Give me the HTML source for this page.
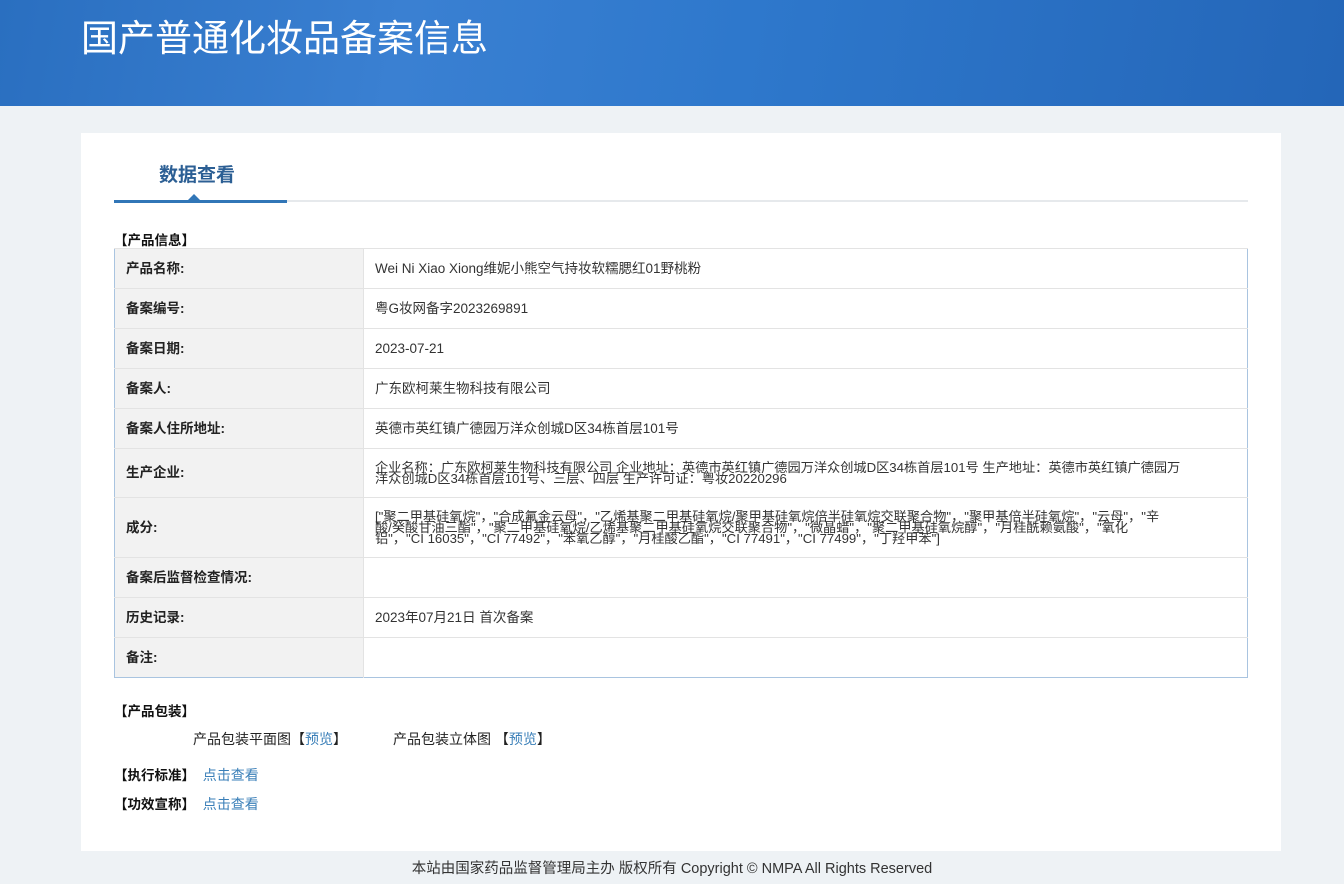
<!DOCTYPE html>
<html><head><meta charset="utf-8"><style>
*{margin:0;padding:0;box-sizing:border-box}
body{width:1344px;height:884px;background:#eef2f5;font-family:"Liberation Sans","Noto Sans CJK SC",sans-serif;color:#333;position:relative;overflow:hidden}
.hdr{position:absolute;left:0;top:0;width:1344px;height:106px;background:linear-gradient(100deg,#2a6fc0 0%,#3a80d2 30%,#2e78cc 55%,#2466b8 100%)}
.hdr h1{position:absolute;left:81px;top:8px;font-size:37px;font-weight:normal;color:#fff}
.card{position:absolute;left:81px;top:133px;width:1200px;height:718px;background:#fff}
.tab{position:absolute;left:159px;top:160px;font-size:19px;font-weight:bold;color:#2c5f94}
.tline{position:absolute;left:114px;top:200px;width:1134px;height:2px;background:#e6e9ec}
.tact{position:absolute;left:114px;top:200px;width:173px;height:3px;background:#3176b7}
.tri{position:absolute;left:187px;top:194px;width:0;height:0;border-left:7px solid transparent;border-right:7px solid transparent;border-bottom:7px solid #3176b7}
.sec{position:absolute;font-size:13.5px;font-weight:bold;color:#111}
table{position:absolute;left:114px;top:248px;width:1134px;border-collapse:collapse;border:1px solid #a9c4e0;font-size:13.5px}
td{border-top:1px solid #e3e3e3;vertical-align:middle;line-height:18px}
td.l{width:249px;background:#f2f2f2;font-weight:bold;color:#222;padding-left:11px;border-right:1px solid #e3e3e3}
td.v{padding-left:11px;padding-right:20px;color:#333;white-space:nowrap}
td.m{line-height:11px;font-size:13.2px}
a{color:#3a7fb8;text-decoration:none}
.foot{position:absolute;top:857px;left:0;width:1344px;text-align:center;font-size:14.5px;color:#333}
</style></head><body>
<div class="hdr"><h1>国产普通化妆品备案信息</h1></div>
<div class="card"></div>
<div class="tab">数据查看</div>
<div class="tline"></div><div class="tact"></div><div class="tri"></div>
<div class="sec" style="left:114px;top:229px">【产品信息】</div>
<table>
<tr style="height:40px"><td class="l">产品名称:</td><td class="v">Wei Ni Xiao Xiong维妮小熊空气持妆软糯腮红01野桃粉</td></tr>
<tr style="height:40px"><td class="l">备案编号:</td><td class="v">粤G妆网备字2023269891</td></tr>
<tr style="height:40px"><td class="l">备案日期:</td><td class="v">2023-07-21</td></tr>
<tr style="height:40px"><td class="l">备案人:</td><td class="v">广东欧柯莱生物科技有限公司</td></tr>
<tr style="height:40px"><td class="l">备案人住所地址:</td><td class="v">英德市英红镇广德园万洋众创城D区34栋首层101号</td></tr>
<tr style="height:49px"><td class="l">生产企业:</td><td class="v m">企业名称：广东欧柯莱生物科技有限公司 企业地址：英德市英红镇广德园万洋众创城D区34栋首层101号 生产地址：英德市英红镇广德园万<br>洋众创城D区34栋首层101号、三层、四层 生产许可证：粤妆20220296</td></tr>
<tr style="height:60px"><td class="l">成分:</td><td class="v m">["聚二甲基硅氧烷"，"合成氟金云母"，"乙烯基聚二甲基硅氧烷/聚甲基硅氧烷倍半硅氧烷交联聚合物"，"聚甲基倍半硅氧烷"，"云母"，"辛<br>酸/癸酸甘油三酯"，"聚二甲基硅氧烷/乙烯基聚二甲基硅氧烷交联聚合物"，"微晶蜡"，"聚二甲基硅氧烷醇"，"月桂酰赖氨酸"，"氧化<br>铝"，"CI 16035"，"CI 77492"，"苯氧乙醇"，"月桂酸乙酯"，"CI 77491"，"CI 77499"，"丁羟甲苯"]</td></tr>
<tr style="height:40px"><td class="l">备案后监督检查情况:</td><td class="v"></td></tr>
<tr style="height:40px"><td class="l">历史记录:</td><td class="v">2023年07月21日 首次备案</td></tr>
<tr style="height:40px"><td class="l">备注:</td><td class="v"></td></tr>
</table>
<div class="sec" style="left:114px;top:700px">【产品包装】</div>
<div style="position:absolute;left:193px;top:729px;font-size:14px;color:#222">产品包装平面图【<a>预览</a>】</div>
<div style="position:absolute;left:393px;top:729px;font-size:14px;color:#222">产品包装立体图 【<a>预览</a>】</div>
<div class="sec" style="left:114px;top:764px">【执行标准】 <a style="font-weight:normal;margin-left:4px;font-size:14px">点击查看</a></div>
<div class="sec" style="left:114px;top:793px">【功效宣称】 <a style="font-weight:normal;margin-left:4px;font-size:14px">点击查看</a></div>
<div class="foot">本站由国家药品监督管理局主办 版权所有 Copyright © NMPA All Rights Reserved</div>
</body></html>
